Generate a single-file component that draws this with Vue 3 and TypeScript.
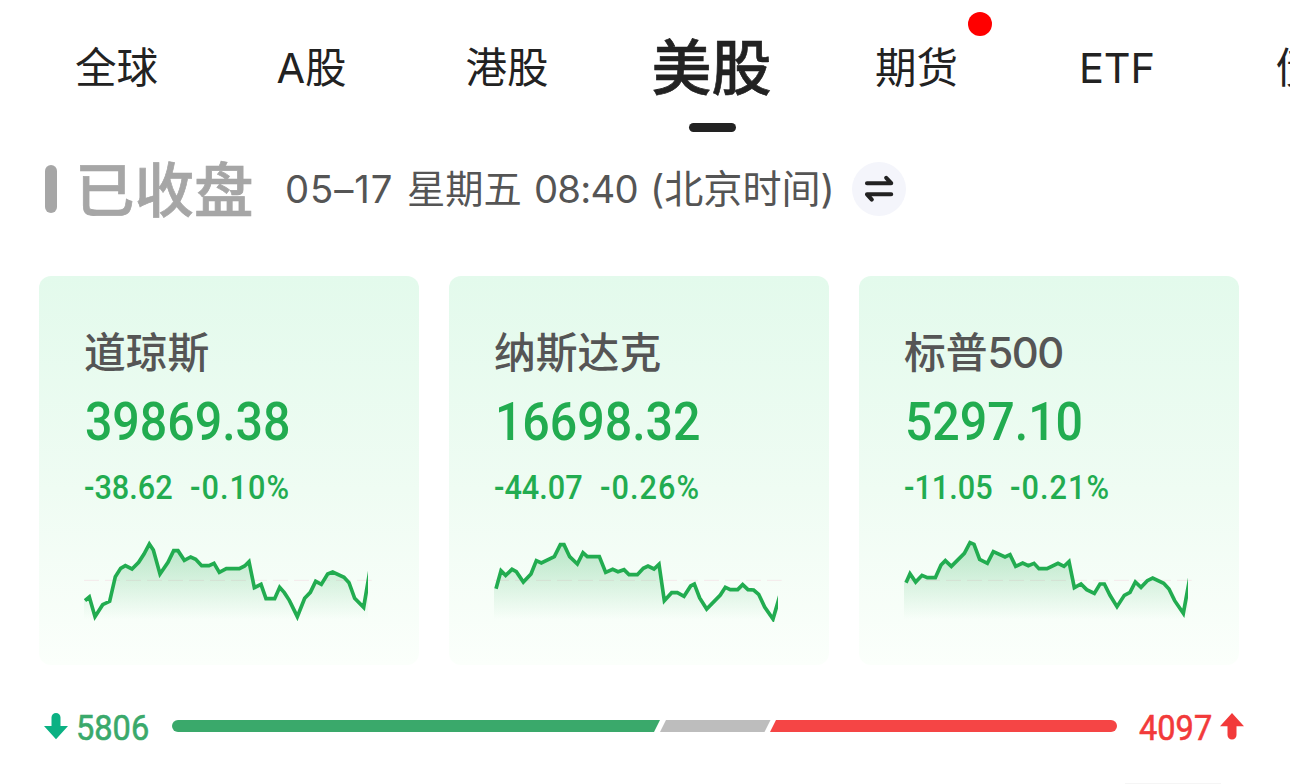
<script setup lang="ts">
interface Tab { label: string; active?: boolean; dot?: boolean; width: number }
interface IndexCard { name: string; digits?: string; value: string; change: string; percent: string; points: string }

const tabs: Tab[] = [
  { label: '全球', width: 82 },
  { label: 'A股', width: 70 },
  { label: '港股', width: 83 },
  { label: '美股', width: 88, active: true },
  { label: '期货', width: 84, dot: true },
  { label: 'ETF', width: 79 },
  { label: '债券', width: 83 },
]

const cards: IndexCard[] = [
  {
    name: '道琼斯', value: '39869.38', change: '-38.62', percent: '-0.10%',
    points: '45,212 58,201 75,260 98,224 119,214 136,140 152,115 166,107 186,117 206,97 222,72 238,42 250,60 270,132 294,97 311,62 324,62 343,91 362,81 377,88 395,107 417,107 432,100 448,127 469,116 508,116 524,108 537,95 553,173 573,163 588,206 614,206 629,172 643,188 658,211 682,260 704,205 721,187 737,154 754,163 773,132 788,126 822,142 837,158 854,205 881,232 900,120',
  },
  {
    name: '纳斯达克', value: '16698.32', change: '-44.07', percent: '-0.26%',
    points: '48,176 63,122 77,136 96,118 109,125 130,156 153,132 169,92 184,99 223,80 241,44 252,44 269,80 292,102 309,68 322,80 358,80 377,127 398,118 414,125 432,119 447,134 472,134 490,115 504,108 522,117 537,103 553,212 575,188 592,188 612,199 632,168 643,162 659,204 680,237 721,195 736,172 751,179 773,179 788,164 804,179 821,180 836,193 854,231 879,267 900,195',
  },
  {
    name: '标普', digits: '500', value: '5297.10', change: '-11.05', percent: '-0.21%',
    points: '48,158 60,131 77,156 96,136 112,143 136,143 153,105 166,92 184,109 223,70 240,38 252,43 269,88 292,100 310,65 345,81 360,74 377,109 398,99 415,107 432,100 447,116 471,116 504,100 522,109 537,95 553,173 573,162 590,179 613,190 630,162 643,162 660,196 681,230 703,196 720,187 736,156 753,172 772,152 788,144 821,160 837,177 854,212 880,250 900,140',
  },
]

const area = (points: string): string => `42,268 42,${points.split(' ')[0].split(',')[1]} ${points} 900,268`
</script>

<template>
  <main class="page">
    <nav class="tabs">
      <div v-for="tab in tabs" :key="tab.label" class="tab" :class="{ active: tab.active }" :style="{ width: tab.width + 'px' }">
        <span class="label">{{ tab.label }}</span>
        <i v-if="tab.active" class="underline"></i>
        <i v-if="tab.dot" class="dot"></i>
      </div>
    </nav>

    <section class="status">
      <i class="mark"></i>
      <h1>已收盘</h1>
      <p class="time"><span class="t-date">05–17</span><span class="t-day">星期五</span><span class="t-clock">08:40</span><span class="t-zone">(北京时间)</span></p>
      <button class="swap" type="button">
        <svg width="54" height="54" viewBox="0 0 54 54" fill="none" stroke="#222" stroke-width="4.1" stroke-linecap="round" stroke-linejoin="round">
          <path d="M15 21.2H39.2L34.2 15.8M39.2 32.3H15L19.8 37.6" />
        </svg>
      </button>
    </section>

    <section class="cards">
      <article v-for="(card, i) in cards" :key="card.name" class="card">
        <h2>{{ card.name }}<span v-if="card.digits" class="digits">{{ card.digits }}</span></h2>
        <div class="value"><span>{{ card.value }}</span></div>
        <div class="delta"><span class="change">{{ card.change }}</span><span class="percent">{{ card.percent }}</span></div>
        <svg class="chart" viewBox="42 24 864 252">
          <defs>
            <linearGradient :id="'fill' + i" gradientUnits="userSpaceOnUse" x1="0" y1="35" x2="0" y2="268">
              <stop offset="0" stop-color="#22ac50" stop-opacity="0.3" />
              <stop offset="1" stop-color="#22ac50" stop-opacity="0" />
            </linearGradient>
            <clipPath :id="'plot' + i"><rect x="42" y="24" width="852" height="252" /></clipPath>
          </defs>
          <line x1="42" x2="905" y1="151" y2="151" stroke="#f3e9ea" stroke-width="3" stroke-dasharray="45 18" />
          <g :clip-path="`url(#plot${i})`">
            <polygon :points="area(card.points)" :fill="`url(#fill${i})`" />
            <polyline :points="card.points" fill="none" stroke="#22ac50" stroke-width="11" />
          </g>
        </svg>
      </article>
    </section>

    <section class="breadth">
      <svg class="arrow" width="24" height="27" viewBox="0 0 24 27"><path d="M7.5 13V4.5a4.5 4.5 0 0 1 9 0V13H24L12 26.3 0 13Z" fill="#0bb183" /></svg>
      <span class="count down"><b>5806</b></span>
      <svg class="bar" width="945" height="12" viewBox="0 0 945 12">
        <path d="M6 0H488L482 12H6A6 6 0 0 1 6 0Z" fill="#3aa96b" />
        <path d="M494 0H598.5L592.5 12H488Z" fill="#bdbdbd" />
        <path d="M604 0H939A6 6 0 0 1 939 12H598Z" fill="#f54545" />
      </svg>
      <span class="count up"><b>4097</b></span>
      <svg class="arrow" width="24" height="27" viewBox="0 0 24 27"><path d="M7.5 13.3V22a4.5 4.5 0 0 0 9 0V13.3H24L12 0 0 13.3Z" fill="#f23a3a" /></svg>
    </section>
    <div class="edge"></div>
  </main>
</template>

<style>
html, body { margin: 0; background: #fff; overflow: hidden; }
</style>

<style scoped>
.page { width: 1290px; height: 784px; box-sizing: border-box; overflow: hidden; background: #fff; display: flex; flex-direction: column; font-family: Inter, "Noto Sans CJK SC", sans-serif; }
.tabs { height: 136px; flex: none; display: flex; gap: 119px; padding-left: 75.5px; box-sizing: border-box; }
.tab { position: relative; flex: none; height: 136px; display: flex; justify-content: center; color: #222; font-size: 41.5px; line-height: 60px; padding-top: 38px; box-sizing: border-box; white-space: nowrap; }
.active { font-size: 60px; font-weight: 500; padding-top: 38px; -webkit-text-stroke: 0.6px #222; }
.underline { position: absolute; left: 21px; top: 123px; width: 47px; height: 9px; border-radius: 4.5px; background: #222; }
.dot { position: absolute; left: 93px; top: 12px; width: 24px; height: 24px; border-radius: 50%; background: #f00; }
.status { height: 106px; flex: none; display: flex; align-items: center; padding-left: 45px; box-sizing: border-box; }
.mark { width: 12px; height: 48px; border-radius: 6px; background: #a6a6a6; }
h1 { margin: 0 0 0 18px; padding-top: 1px; width: 181px; font-size: 59.5px; line-height: 80px; font-weight: 500; color: #a6a6a6; white-space: nowrap; -webkit-text-stroke: 0.7px #a6a6a6; }
.time { margin: 0; width: 596px; display: flex; font-size: 38.3px; line-height: 60px; color: #555; white-space: nowrap; padding-left: 29px; box-sizing: border-box; }
.t-date { width: 122px; letter-spacing: 0.9px; }
.t-day { width: 127px; }
.t-clock { width: 116px; letter-spacing: -0.8px; }
.t-zone { font-size: 39.1px; }
.swap { width: 54px; height: 54px; border: 0; padding: 0; border-radius: 50%; background: #f4f5fb; }
.swap svg { display: block; }
.cards { display: flex; gap: 30px; padding: 34px 0 0 39px; flex: none; }
.card { width: 380px; height: 389px; border-radius: 12px; box-sizing: border-box; padding: 49px 0 0 45px; background: linear-gradient(#e3faec, #effcf3 55%, #fbfffb); }
h2 { margin: 0; font-size: 41.8px; line-height: 56px; font-weight: 500; color: #555; white-space: nowrap; }
.digits { letter-spacing: -1.6px; }
.value { margin-top: 13px; height: 56px; font: 500 53.5px/56px Roboto, sans-serif; color: #22ac50; }
.value span { display: inline-block; transform: scaleX(0.903); transform-origin: 0 50%; padding-left: 1px; }
.delta { margin-top: 18px; height: 40px; display: flex; font: 500 32.3px/40px Roboto, sans-serif; color: #22ac50; }
.delta span { width: 106px; transform: scaleX(0.95); transform-origin: 0 50%; white-space: nowrap; flex: none; }
.delta .percent { letter-spacing: 1.1px; }
.chart { display: block; width: 288px; height: 84px; margin-top: 30px; }
.breadth { height: 64px; margin-top: 29px; display: flex; align-items: center; padding-left: 44px; flex: none; }
.arrow { flex: none; display: block; }
.count { width: 95px; font: 400 35px/44px Roboto, sans-serif; margin-left: 9px; padding-top: 6px; }
.count b { font-weight: inherit; display: inline-block; transform: scaleX(0.93); transform-origin: 0 50%; -webkit-text-stroke: 0.6px currentColor; }
.down { color: #3aa96b; margin-left: 8px; width: 96px; }
.up { color: #f23a3a; margin-left: 22px; width: 81px; }
.bar { display: block; flex: none; }
.edge { margin-top: 25px; margin-left: 1125px; width: 96px; height: 1px; background: #f5f5f5; flex: none; }
</style>
